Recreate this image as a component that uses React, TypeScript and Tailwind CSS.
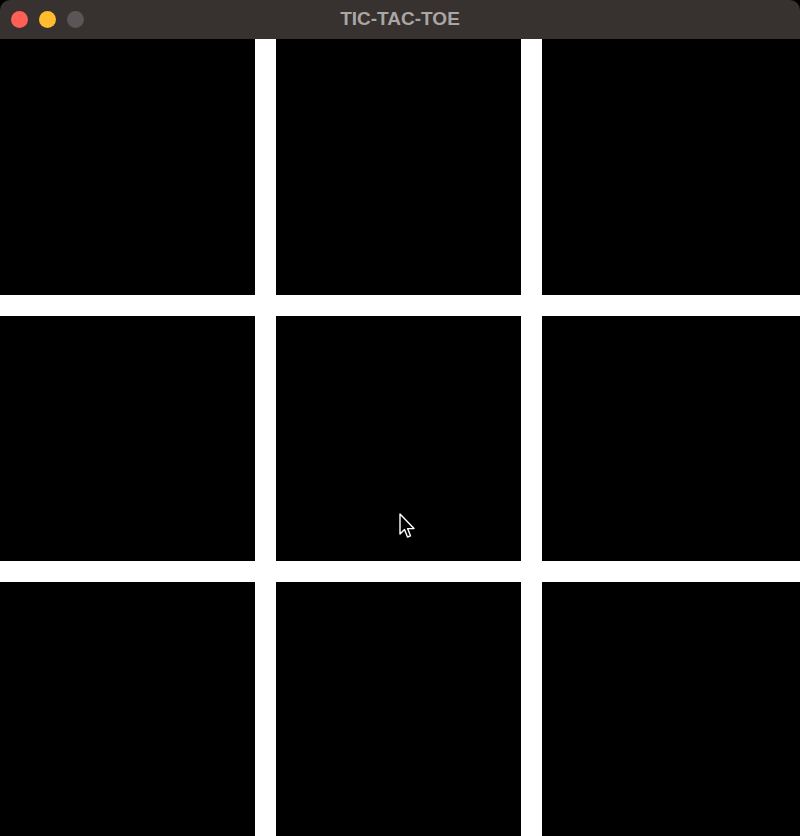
export default function App() {
    const cells = Array.from({ length: 9 })

    return (
        <div className="relative flex h-[836px] w-[800px] flex-col overflow-hidden bg-black font-['Liberation_Sans',Arial,sans-serif]">
            {/* window title bar */}
            <div className="relative flex h-[39px] shrink-0 items-center justify-center rounded-t-[10px] bg-[#37312f]">
                <div className="absolute left-[11px] top-[11px] flex gap-[11px]">
                    <span className="h-[17px] w-[17px] rounded-full bg-[#fe5f57]" />
                    <span className="h-[17px] w-[17px] rounded-full bg-[#febc2e]" />
                    <span className="h-[17px] w-[17px] rounded-full bg-[#5a5556]" />
                </div>
                <p className="text-[19px] font-bold text-[#aaa6a5]">TIC-TAC-TOE</p>
            </div>

            {/* board */}
            <div className="grid flex-1 grid-cols-[255px_245px_1fr] grid-rows-[256px_245px_1fr] gap-[21px] bg-white">
                {cells.map((_, i) => (
                    <button key={i} className="bg-black" />
                ))}
            </div>

            {/* mouse pointer */}
            <svg
                className="absolute left-[399px] top-[513px]"
                width="18"
                height="27"
                viewBox="0 0 18 27"
            >
                <path
                    d="M1 1 L1 21 L5.5 16.5 L8.5 24 L11.5 22.8 L8.6 15.6 L15 15.6 Z"
                    fill="#000"
                    stroke="#fff"
                    strokeWidth="1.4"
                    strokeLinejoin="round"
                />
            </svg>
        </div>
    )
}
